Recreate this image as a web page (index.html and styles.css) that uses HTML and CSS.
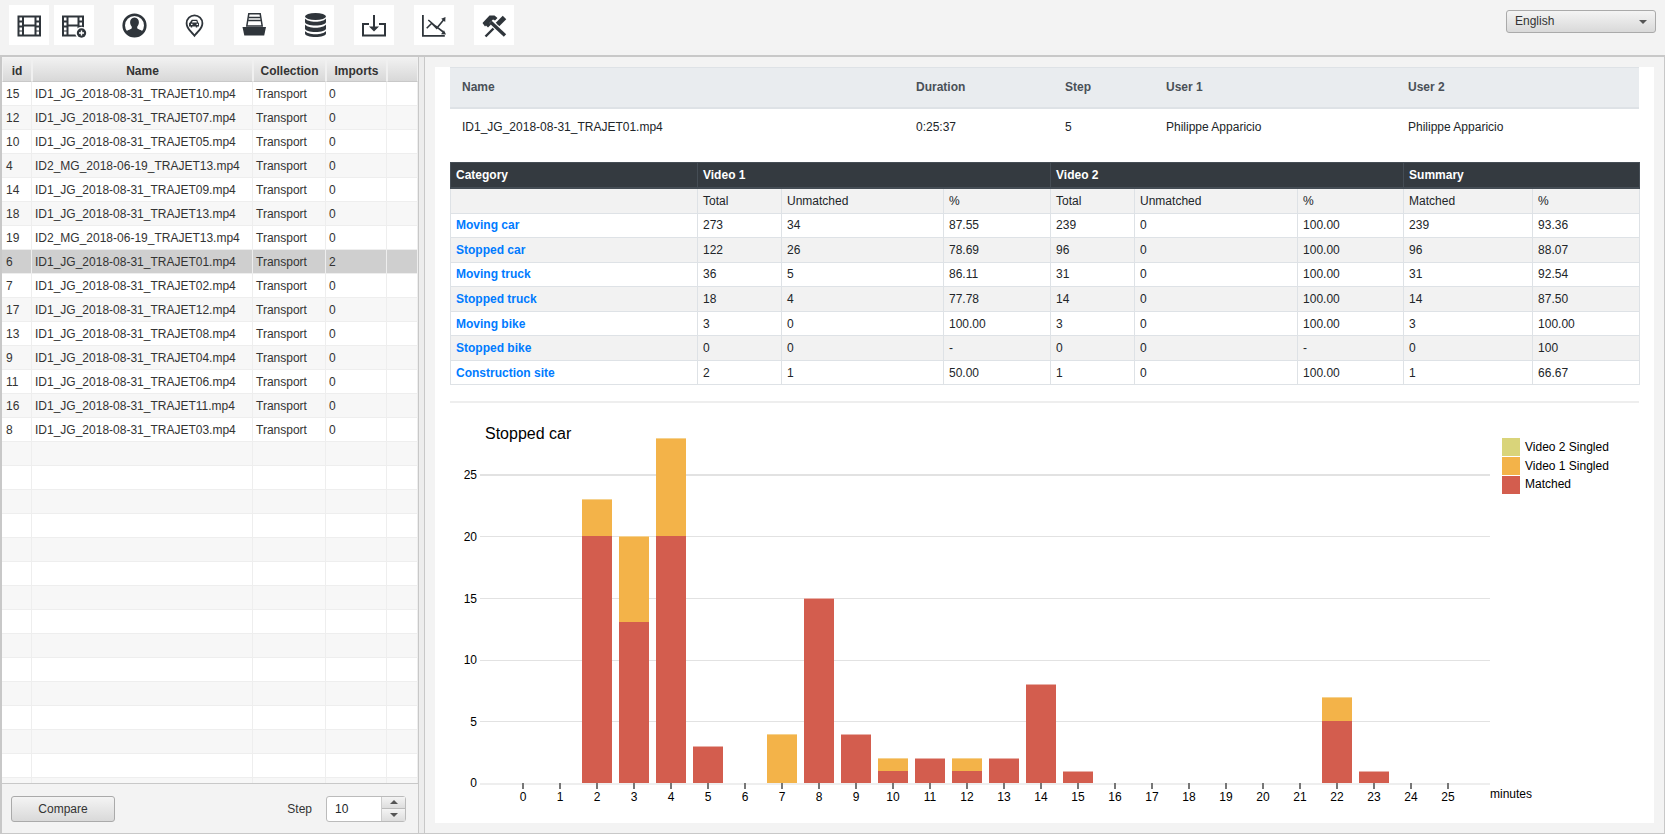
FILE: index.html
```html
<!DOCTYPE html>
<html>
  <head>
    <title>Video compare</title>
    <link rel="stylesheet" href="styles.css">
  </head>
  <body>
    <!-- Toolbar -->
    <div class="toolbar">
      <a class="tool">
        <svg viewBox="0 0 40 40"><path fill-rule="evenodd" d="M8.500 10.500h23.500v21H8.500zM10.500 12.500v3h2.500v-3zM10.500 17.500v3h2.500v-3zM10.500 22.500v3h2.500v-3zM10.500 26.500v3h2.500v-3zM27.500 12.500v3h2.500v-3zM27.500 17.500v3h2.500v-3zM27.500 22.500v3h2.500v-3zM27.500 26.500v3h2.500v-3zM15 12.500v7h10.500v-7zM15 21.500v8h10.500v-8z"/></svg>
      </a>
      <a class="tool">
        <svg viewBox="0 0 40 40"><path fill-rule="evenodd" d="M8 10.500h22v21H8zM10 12.500v3h2.500v-3zM10 17.500v3h2.500v-3zM10 22.500v3h2.500v-3zM10 26.500v3h2.500v-3zM25.500 12.500v3h2.500v-3zM25.500 17.500v3h2.500v-3zM14.500 12.500v7h9v-7zM14.500 21.500v8h9v-8z"/><circle cx="27.500" cy="28" r="6.300" fill="white"/><circle cx="27.500" cy="28" r="4.700"/><path d="M27.500 25.500v5M25 28h5" stroke="white" stroke-width="1.400"/></svg>
      </a>
      <a class="tool">
        <svg viewBox="0 0 40 40"><circle cx="20.500" cy="20.500" r="10.800" fill="none" stroke-width="2.600" stroke="#2f353b"/><path d="M20.500 12.500c2.900 0 4.400 2.200 4.400 4.800c0 1.900-.8 3.400-1.700 4.400v1.600c.5 1 4.200 1.700 5.800 3.500a9.800 9.800 0 0 1-17 0c1.600-1.800 5.300-2.500 5.800-3.500v-1.600c-.9-1-1.700-2.500-1.700-4.400c0-2.600 1.500-4.800 4.400-4.800z"/></svg>
      </a>
      <a class="tool">
        <svg viewBox="0 0 40 40"><path fill-rule="evenodd" d="M20.500 9.500a8.800 8.800 0 0 1 8.800 8.800c0 5.500-5.500 9.500-8.800 14c-3.300-4.500-8.800-8.500-8.800-14a8.800 8.800 0 0 1 8.800-8.800zM20.500 11.300a7 7 0 0 0-7 7c0 4.200 4.500 7.800 7 11c2.500-3.200 7-6.800 7-11a7 7 0 0 0-7-7z"/><path fill-rule="evenodd" d="M17.800 14.800h5.400l1 2.800l.8.600v3.200h-1.700v1h-1.500v-1h-3.600v1h-1.500v-1h-1.700v-3.200l.8-.6zM18.600 15.900l-.6 1.700h5l-.6-1.700zM17 18.800v1.200h1.500v-1.200zM22.500 18.800v1.200h1.500v-1.200z"/></svg>
      </a>
      <a class="tool">
        <svg viewBox="0 0 40 40"><path d="M8.500 22h23.500l-1.800 8.500H10.300z"/><path d="M14.800 8.800h11.400l2 12.200H12.800zM15 12.500h11M14.500 15.500h12" fill="none" stroke="#2f353b" stroke-width="1.500"/></svg>
      </a>
      <a class="tool">
        <svg viewBox="0 0 40 40"><ellipse cx="21.500" cy="11.500" rx="10.500" ry="3.500"/><path d="M11 13.500v3.500c0 2 4.700 3.500 10.500 3.500s10.500-1.500 10.500-3.500v-3.500c-1.500 2-5.500 3.200-10.500 3.200s-9-1.200-10.500-3.200zM11 19.500v4c0 2 4.700 3.500 10.500 3.500s10.500-1.500 10.500-3.500v-4c-1.500 2-5.500 3.200-10.500 3.200s-9-1.200-10.500-3.200zM11 26v2.500c0 2 4.700 3.500 10.500 3.500s10.500-1.500 10.500-3.500v-2.500c-1.500 2-5.500 3.200-10.500 3.200s-9-1.200-10.500-3.200z"/></svg>
      </a>
      <a class="tool">
        <svg viewBox="0 0 40 40"><path d="M8 18h7v2h-5v9.500h20v-9.500h-5v-2h7v13.500H8z"/><path d="M19 10h2v11.500h4l-5 5l-5-5h4z"/></svg>
      </a>
      <a class="tool">
        <svg viewBox="0 0 40 40"><path d="M8 10h1.800v20h21v1.800H8z"/><path d="M12.700 23.300l5-5l5 5l7-8.500M14.300 15l7 6l8 6" fill="none" stroke="#2f353b" stroke-width="1.600"/><path d="M31.500 12l-.3 5l-4-3.200zM32 29.500l-5-.3l3-4z"/></svg>
      </a>
      <a class="tool">
        <svg viewBox="0 0 40 40"><path d="M11.500 31.500l12-12" stroke="#2f353b" stroke-width="2.400"/><path d="M23.500 19.500l7-7" stroke="#2f353b" stroke-width="5"/><path d="M16.500 17l14.500 13.500" stroke="white" stroke-width="5.500"/><path d="M16.500 17l14.500 13.500" stroke="#2f353b" stroke-width="3.400"/><path d="M8.500 18l7-7.500h5l3 2.500l-2.500 2.500l-2-1l-3.500 3.500l1.500 1.500l-3 3l-2-2l-1 1z"/></svg>
      </a>
      <div class="lang-select">English<span class="caret"></span></div>
    </div>

    <div class="main">
      <!-- Video list -->
      <div class="left-panel">
        <div class="grid-wrap">
          <table class="grid">
            <colgroup>
              <col class="g-id"><col class="g-name"><col class="g-coll"><col class="g-imp"><col class="g-rest">
            </colgroup>
            <thead>
              <tr><th>id</th><th>Name</th><th>Collection</th><th>Imports</th><th></th></tr>
            </thead>
            <tbody>
              <tr><td>15</td><td>ID1_JG_2018-08-31_TRAJET10.mp4</td><td>Transport</td><td>0</td><td></td></tr>
              <tr><td>12</td><td>ID1_JG_2018-08-31_TRAJET07.mp4</td><td>Transport</td><td>0</td><td></td></tr>
              <tr><td>10</td><td>ID1_JG_2018-08-31_TRAJET05.mp4</td><td>Transport</td><td>0</td><td></td></tr>
              <tr><td>4</td><td>ID2_MG_2018-06-19_TRAJET13.mp4</td><td>Transport</td><td>0</td><td></td></tr>
              <tr><td>14</td><td>ID1_JG_2018-08-31_TRAJET09.mp4</td><td>Transport</td><td>0</td><td></td></tr>
              <tr><td>18</td><td>ID1_JG_2018-08-31_TRAJET13.mp4</td><td>Transport</td><td>0</td><td></td></tr>
              <tr><td>19</td><td>ID2_MG_2018-06-19_TRAJET13.mp4</td><td>Transport</td><td>0</td><td></td></tr>
              <tr class="selected"><td>6</td><td>ID1_JG_2018-08-31_TRAJET01.mp4</td><td>Transport</td><td>2</td><td></td></tr>
              <tr><td>7</td><td>ID1_JG_2018-08-31_TRAJET02.mp4</td><td>Transport</td><td>0</td><td></td></tr>
              <tr><td>17</td><td>ID1_JG_2018-08-31_TRAJET12.mp4</td><td>Transport</td><td>0</td><td></td></tr>
              <tr><td>13</td><td>ID1_JG_2018-08-31_TRAJET08.mp4</td><td>Transport</td><td>0</td><td></td></tr>
              <tr><td>9</td><td>ID1_JG_2018-08-31_TRAJET04.mp4</td><td>Transport</td><td>0</td><td></td></tr>
              <tr><td>11</td><td>ID1_JG_2018-08-31_TRAJET06.mp4</td><td>Transport</td><td>0</td><td></td></tr>
              <tr><td>16</td><td>ID1_JG_2018-08-31_TRAJET11.mp4</td><td>Transport</td><td>0</td><td></td></tr>
              <tr><td>8</td><td>ID1_JG_2018-08-31_TRAJET03.mp4</td><td>Transport</td><td>0</td><td></td></tr>
              <tr><td></td><td></td><td></td><td></td><td></td></tr>
              <tr><td></td><td></td><td></td><td></td><td></td></tr>
              <tr><td></td><td></td><td></td><td></td><td></td></tr>
              <tr><td></td><td></td><td></td><td></td><td></td></tr>
              <tr><td></td><td></td><td></td><td></td><td></td></tr>
              <tr><td></td><td></td><td></td><td></td><td></td></tr>
              <tr><td></td><td></td><td></td><td></td><td></td></tr>
              <tr><td></td><td></td><td></td><td></td><td></td></tr>
              <tr><td></td><td></td><td></td><td></td><td></td></tr>
              <tr><td></td><td></td><td></td><td></td><td></td></tr>
              <tr><td></td><td></td><td></td><td></td><td></td></tr>
              <tr><td></td><td></td><td></td><td></td><td></td></tr>
              <tr><td></td><td></td><td></td><td></td><td></td></tr>
              <tr><td></td><td></td><td></td><td></td><td></td></tr>
              <tr><td></td><td></td><td></td><td></td><td></td></tr>
            </tbody>
          </table>
        </div>
        <div class="left-footer">
          <button class="compare-btn">Compare</button>
          <span class="step-label">Step</span>
          <div class="spinner">
            <span class="spinner-value">10</span>
            <div class="spinner-btns">
              <div class="spin-btn"><span class="arrow-up"></span></div>
              <div class="spin-btn"><span class="arrow-down"></span></div>
            </div>
          </div>
        </div>
      </div>

      <div class="splitter"></div>

      <!-- Results -->
      <div class="right-panel">
        <div class="content">
          <table class="info">
            <colgroup>
              <col class="i-name"><col class="i-dur"><col class="i-step"><col class="i-user"><col class="i-user2">
            </colgroup>
            <thead>
              <tr><th>Name</th><th>Duration</th><th>Step</th><th>User 1</th><th>User 2</th></tr>
            </thead>
            <tbody>
              <tr><td>ID1_JG_2018-08-31_TRAJET01.mp4</td><td>0:25:37</td><td>5</td><td>Philippe Apparicio</td><td>Philippe Apparicio</td></tr>
            </tbody>
          </table>

          <table class="stats">
            <colgroup>
              <col class="s-cat"><col class="s-total"><col class="s-unm"><col class="s-pct">
              <col class="s-total2"><col class="s-unm2"><col class="s-pct2"><col class="s-match"><col class="s-pct3">
            </colgroup>
            <thead>
              <tr class="stats-head"><th>Category</th><th colspan="3">Video 1</th><th colspan="3">Video 2</th><th colspan="2">Summary</th></tr>
              <tr class="stats-sub"><td></td><td>Total</td><td>Unmatched</td><td>%</td><td>Total</td><td>Unmatched</td><td>%</td><td>Matched</td><td>%</td></tr>
            </thead>
            <tbody>
              <tr><td><a class="cat-link">Moving car</a></td><td>273</td><td>34</td><td>87.55</td><td>239</td><td>0</td><td>100.00</td><td>239</td><td>93.36</td></tr>
              <tr><td><a class="cat-link">Stopped car</a></td><td>122</td><td>26</td><td>78.69</td><td>96</td><td>0</td><td>100.00</td><td>96</td><td>88.07</td></tr>
              <tr><td><a class="cat-link">Moving truck</a></td><td>36</td><td>5</td><td>86.11</td><td>31</td><td>0</td><td>100.00</td><td>31</td><td>92.54</td></tr>
              <tr><td><a class="cat-link">Stopped truck</a></td><td>18</td><td>4</td><td>77.78</td><td>14</td><td>0</td><td>100.00</td><td>14</td><td>87.50</td></tr>
              <tr><td><a class="cat-link">Moving bike</a></td><td>3</td><td>0</td><td>100.00</td><td>3</td><td>0</td><td>100.00</td><td>3</td><td>100.00</td></tr>
              <tr><td><a class="cat-link">Stopped bike</a></td><td>0</td><td>0</td><td>-</td><td>0</td><td>0</td><td>-</td><td>0</td><td>100</td></tr>
              <tr><td><a class="cat-link">Construction site</a></td><td>2</td><td>1</td><td>50.00</td><td>1</td><td>0</td><td>100.00</td><td>1</td><td>66.67</td></tr>
            </tbody>
          </table>

          <hr class="sep">

          <!-- Chart, drawn in page coordinates -->
          <svg class="chart" viewBox="450 404 1204 419">
            <text class="chart-title" x="485" y="439">Stopped car</text>

            <g class="grid-lines">
              <rect x="480" y="474" width="1010" height="2"/>
              <rect x="480" y="536" width="1010" height="1"/>
              <rect x="480" y="598" width="1010" height="1"/>
              <rect x="480" y="660" width="1010" height="1"/>
              <rect x="480" y="721" width="1010" height="1"/>
              <rect class="axis-line" x="480" y="783" width="1010" height="2"/>
            </g>

            <g class="y-labels">
              <text x="477" y="479">25</text>
              <text x="477" y="541">20</text>
              <text x="477" y="603">15</text>
              <text x="477" y="664">10</text>
              <text x="477" y="726">5</text>
              <text x="477" y="787">0</text>
            </g>

            <path class="ticks" d="M523 783v6M560 783v6M597 783v6M634 783v6M671 783v6M708 783v6M745 783v6M782 783v6M819 783v6M856 783v6M893 783v6M930 783v6M967 783v6M1004 783v6M1041 783v6M1078 783v6M1115 783v6M1152 783v6M1189 783v6M1226 783v6M1263 783v6M1300 783v6M1337 783v6M1374 783v6M1411 783v6M1448 783v6"/>

            <g class="x-labels">
              <text x="523" y="801">0</text><text x="560" y="801">1</text><text x="597" y="801">2</text><text x="634" y="801">3</text>
              <text x="671" y="801">4</text><text x="708" y="801">5</text><text x="745" y="801">6</text><text x="782" y="801">7</text>
              <text x="819" y="801">8</text><text x="856" y="801">9</text><text x="893" y="801">10</text><text x="930" y="801">11</text>
              <text x="967" y="801">12</text><text x="1004" y="801">13</text><text x="1041" y="801">14</text><text x="1078" y="801">15</text>
              <text x="1115" y="801">16</text><text x="1152" y="801">17</text><text x="1189" y="801">18</text><text x="1226" y="801">19</text>
              <text x="1263" y="801">20</text><text x="1300" y="801">21</text><text x="1337" y="801">22</text><text x="1374" y="801">23</text>
              <text x="1411" y="801">24</text><text x="1448" y="801">25</text>
            </g>
            <text x="1490" y="798">minutes</text>

            <g class="bar-red">
              <rect x="582" y="536" width="30" height="247"/>
              <rect x="619" y="622" width="30" height="161"/>
              <rect x="656" y="536" width="30" height="247"/>
              <rect x="693" y="746" width="30" height="37"/>
              <rect x="804" y="598" width="30" height="185"/>
              <rect x="841" y="734" width="30" height="49"/>
              <rect x="878" y="771" width="30" height="12"/>
              <rect x="915" y="758" width="30" height="25"/>
              <rect x="952" y="771" width="30" height="12"/>
              <rect x="989" y="758" width="30" height="25"/>
              <rect x="1026" y="684" width="30" height="99"/>
              <rect x="1063" y="771" width="30" height="12"/>
              <rect x="1322" y="721" width="30" height="62"/>
              <rect x="1359" y="771" width="30" height="12"/>
            </g>
            <g class="bar-orange">
              <rect x="582" y="499" width="30" height="37"/>
              <rect x="619" y="536" width="30" height="86"/>
              <rect x="656" y="438" width="30" height="98"/>
              <rect x="767" y="734" width="30" height="49"/>
              <rect x="878" y="758" width="30" height="13"/>
              <rect x="952" y="758" width="30" height="13"/>
              <rect x="1322" y="697" width="30" height="24"/>
            </g>
            <g class="bar-cap-red">
              <rect x="693" y="746" width="30" height="1"/>
              <rect x="804" y="598" width="30" height="1"/>
              <rect x="841" y="734" width="30" height="1"/>
              <rect x="915" y="758" width="30" height="1"/>
              <rect x="989" y="758" width="30" height="1"/>
              <rect x="1026" y="684" width="30" height="1"/>
              <rect x="1063" y="771" width="30" height="1"/>
              <rect x="1359" y="771" width="30" height="1"/>
            </g>
            <g class="bar-cap-orange">
              <rect x="582" y="499" width="30" height="1"/>
              <rect x="619" y="536" width="30" height="1"/>
              <rect x="656" y="438" width="30" height="1"/>
              <rect x="767" y="734" width="30" height="1"/>
              <rect x="878" y="758" width="30" height="1"/>
              <rect x="952" y="758" width="30" height="1"/>
              <rect x="1322" y="697" width="30" height="1"/>
            </g>

            <g class="legend">
              <rect class="swatch-yellow" x="1502" y="438" width="18" height="18"/>
              <rect class="swatch-orange" x="1502" y="457" width="18" height="18"/>
              <rect class="swatch-red" x="1502" y="476" width="18" height="18"/>
              <text x="1525" y="451">Video 2 Singled</text>
              <text x="1525" y="470">Video 1 Singled</text>
              <text x="1525" y="488">Matched</text>
            </g>
          </svg>
        </div>
      </div>
    </div>
  </body>
</html>
```

FILE: styles.css
```css
/* Page */
html, body {
  margin: 0;
  height: 100%;
  overflow: hidden;
}
body {
  display: flex;
  flex-direction: column;
  background-color: #f3f3f3;
  color: #212529;
  font-family: "Liberation Sans", Arial, sans-serif;
  font-size: 12px;
}

/* Toolbar */
.toolbar {
  display: flex;
  align-items: flex-start;
  gap: 20px;
  box-sizing: border-box;
  height: 57px;
  padding: 5px 9px 0 9px;
  border-bottom: 2px solid #c8c8c8;
}
.tool {
  width: 40px;
  height: 40px;
  background-color: white;
}
.tool svg {
  display: block;
  width: 40px;
  height: 40px;
  fill: #2f353b;
}
.tool:first-child {
  margin-right: -15px;
}
.lang-select {
  position: relative;
  box-sizing: border-box;
  width: 150px;
  height: 23px;
  margin: 5px 0 0 auto;
  padding-left: 8px;
  line-height: 21px;
  color: #333333;
  border: 1px solid #aaaaaa;
  border-radius: 3px;
  background: linear-gradient(#f4f4f4, #d9d9d9);
}
.caret {
  position: absolute;
  right: 8px;
  top: 9px;
  border-left: 4px solid transparent;
  border-right: 4px solid transparent;
  border-top: 4px solid #555555;
}

/* Main area */
.main {
  display: flex;
  height: 776px;
  border-bottom: 1px solid #c8c8c8;
}

/* Left panel */
.left-panel {
  display: flex;
  flex-direction: column;
  box-sizing: border-box;
  width: 419px;
  border-left: 2px solid #c8c8c8;
  border-right: 1px solid #c8c8c8;
}
.grid-wrap {
  height: 726px;
  padding-top: 1px;
  box-sizing: border-box;
  overflow: hidden;
}
.grid {
  width: 416px;
  table-layout: fixed;
  border-collapse: separate;
  border-spacing: 0;
  color: #333333;
  background-color: white;
}
.g-id { width: 30px; }
.g-name { width: 221px; }
.g-coll { width: 73px; }
.g-imp { width: 61px; }
.g-rest { width: 31px; }
.grid th {
  height: 24px;
  padding: 1px 0 0 0;
  box-sizing: border-box;
  text-align: center;
  border: 1px solid #f0f0f0;
  border-bottom-color: #c8c8c8;
  background: linear-gradient(#f0f0f0, #d8d8d8);
}
.grid td {
  height: 24px;
  box-sizing: border-box;
  padding: 0 3px;
  white-space: nowrap;
  overflow: hidden;
  border-right: 1px solid #eeeeee;
  border-bottom: 1px solid #eeeeee;
}
.grid td:first-child {
  padding-left: 4px;
}
.grid tbody tr:nth-child(even) td {
  background-color: #f7f7f7;
}
.grid tbody tr.selected td {
  background-color: #cfcfcf;
}
.left-footer {
  display: flex;
  align-items: center;
  flex: 1;
  padding: 0 12px 0 9px;
  border-top: 1px solid #c8c8c8;
}
.compare-btn {
  width: 104px;
  height: 26px;
  padding: 0;
  color: #333333;
  font-family: inherit;
  font-size: 12px;
  border: 1px solid #aaaaaa;
  border-radius: 3px;
  background: linear-gradient(#f4f4f4, #d9d9d9);
}
.step-label {
  margin-left: auto;
  margin-right: 14px;
  color: #333333;
}
.spinner {
  display: flex;
  box-sizing: border-box;
  width: 80px;
  height: 26px;
  border: 1px solid #bbbbbb;
  border-radius: 3px;
  background-color: white;
}
.spinner-value {
  flex: 1;
  padding-left: 8px;
  line-height: 24px;
}
.spinner-btns {
  width: 23px;
  border-left: 1px solid #cccccc;
  display: flex;
  flex-direction: column;
}
.spin-btn {
  flex: 1;
  display: flex;
  align-items: center;
  justify-content: center;
  background: linear-gradient(#f4f4f4, #dddddd);
}
.spin-btn + .spin-btn {
  border-top: 1px solid #bbbbbb;
}
.arrow-up {
  border-left: 4px solid transparent;
  border-right: 4px solid transparent;
  border-bottom: 4px solid #555555;
}
.arrow-down {
  border-left: 4px solid transparent;
  border-right: 4px solid transparent;
  border-top: 4px solid #555555;
}

/* Splitter */
.splitter {
  box-sizing: border-box;
  width: 6px;
  background-color: #ededed;
  border-right: 1px solid #c8c8c8;
}

/* Right panel */
.right-panel {
  flex: 1;
  box-sizing: border-box;
  padding: 10px;
  border-right: 1px solid #c8c8c8;
}
.content {
  height: 756px;
  padding-left: 15px;
  background-color: white;
  overflow: hidden;
}

/* Info table */
.info {
  width: 1189px;
  table-layout: fixed;
  border-collapse: collapse;
  margin-bottom: 16px;
}
.i-name { width: 454px; }
.i-dur { width: 149px; }
.i-step { width: 101px; }
.i-user { width: 242px; }
.i-user2 { width: 243px; }
.info th {
  height: 40px;
  box-sizing: border-box;
  padding: 0 12px;
  text-align: left;
  color: #495057;
  background-color: #e9ecef;
  border-top: 1px solid #dee2e6;
  border-bottom: 2px solid #dee2e6;
}
.info td {
  height: 38px;
  box-sizing: border-box;
  padding: 0 12px;
}

/* Stats table */
.stats {
  width: 1189px;
  table-layout: fixed;
  border-collapse: collapse;
}
.s-cat { width: 247px; }
.s-total, .s-total2 { width: 84px; }
.s-unm { width: 162px; }
.s-pct { width: 107px; }
.s-unm2 { width: 163px; }
.s-pct2 { width: 106px; }
.s-match { width: 129px; }
.s-pct3 { width: 107px; }
.stats th, .stats td {
  box-sizing: border-box;
  padding: 0 5px;
  text-align: left;
  border: 1px solid #dee2e6;
}
.stats td {
  height: 24.57px;
}
.stats-head th {
  height: 26px;
  color: white;
  background-color: #343a40;
  border-color: #454d55;
  border-bottom-width: 2px;
}
.stats .stats-sub td {
  height: 25px;
  background-color: #f2f2f2;
}
.stats tbody tr:nth-child(even) td {
  background-color: #f2f2f2;
}
.cat-link {
  color: #007bff;
  font-weight: bold;
}

/* Separator */
.sep {
  width: 1189px;
  height: 2px;
  margin: 16px 0 1px 0;
  border: 0;
  background-color: #eeeeee;
}

/* Chart */
.chart {
  display: block;
  width: 1204px;
  height: 419px;
  font-size: 12px;
}
.chart-title {
  font-size: 16px;
}
.grid-lines rect {
  fill: #e2e2e2;
}
.grid-lines .axis-line {
  fill: #eeeeee;
}
.ticks {
  stroke: #777777;
  stroke-width: 2;
}
.y-labels text {
  text-anchor: end;
}
.x-labels text {
  text-anchor: middle;
}
.bar-red rect, .swatch-red {
  fill: #d35d4e;
}
.bar-orange rect, .swatch-orange {
  fill: #f3b349;
}
.bar-cap-red rect {
  fill: #e8b0a8;
}
.bar-cap-orange rect {
  fill: #f5d28f;
}
.swatch-yellow {
  fill: #d9d47a;
}
```
